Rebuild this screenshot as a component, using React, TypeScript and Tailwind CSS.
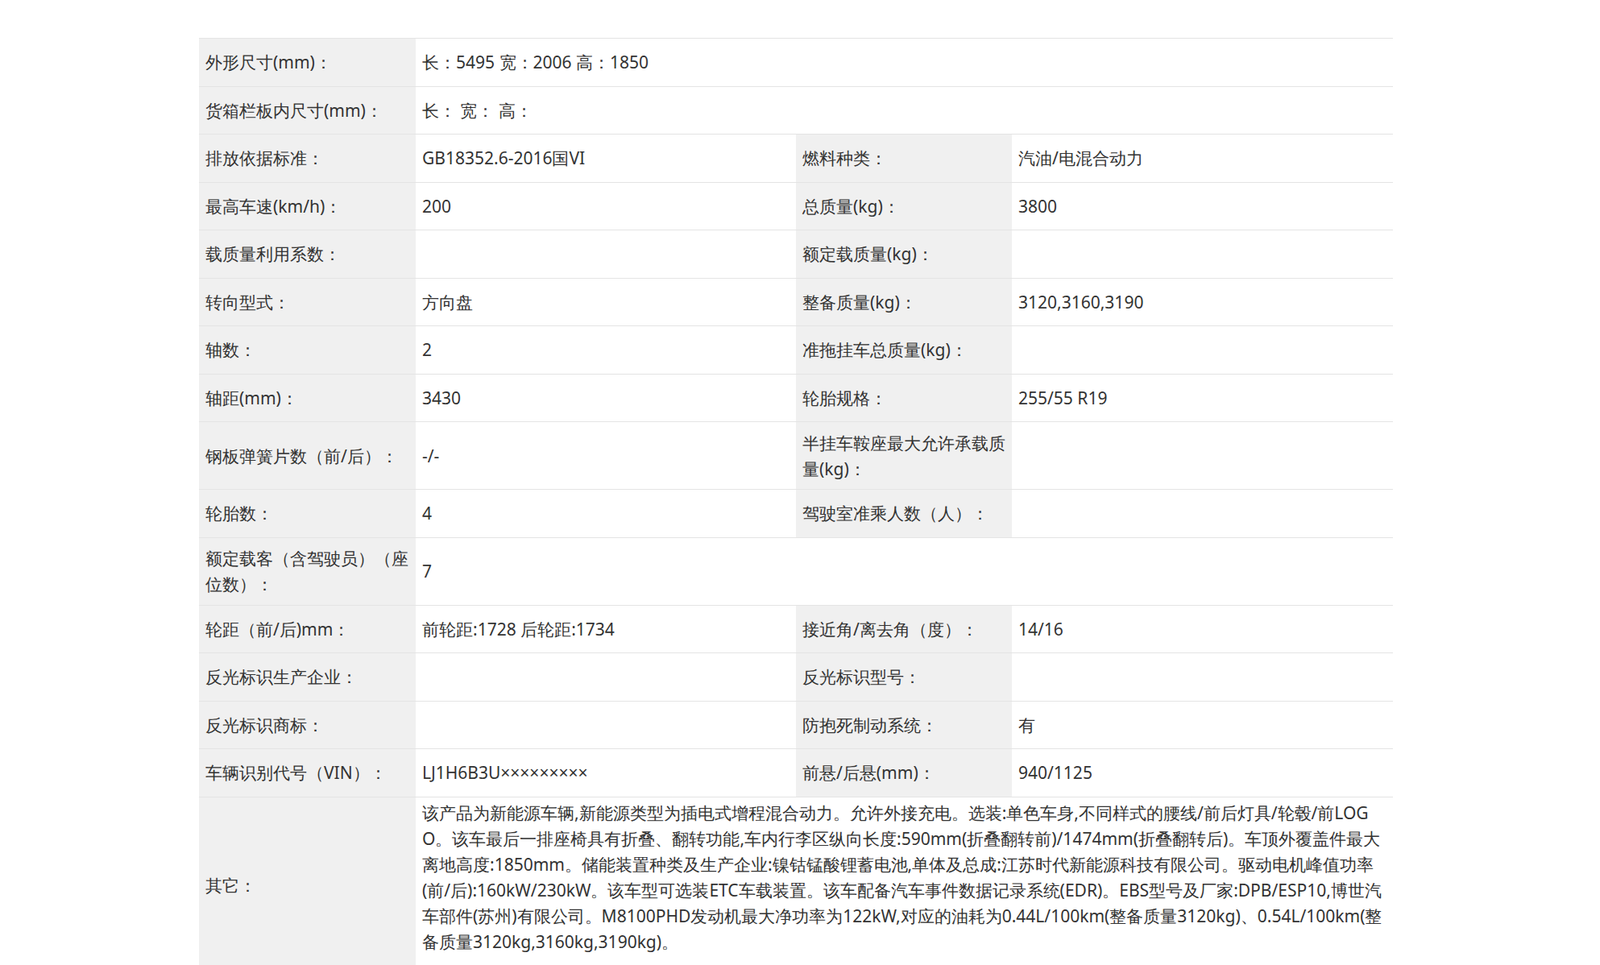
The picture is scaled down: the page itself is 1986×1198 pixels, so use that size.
const rows: [string, string, string?, string?][] = [
  ["外形尺寸(mm)：", "长：5495 宽：2006 高：1850"],
  ["货箱栏板内尺寸(mm)：", "长： 宽： 高："],
  ["排放依据标准：", "GB18352.6-2016国VI", "燃料种类：", "汽油/电混合动力"],
  ["最高车速(km/h)：", "200", "总质量(kg)：", "3800"],
  ["载质量利用系数：", "", "额定载质量(kg)：", ""],
  ["转向型式：", "方向盘", "整备质量(kg)：", "3120,3160,3190"],
  ["轴数：", "2", "准拖挂车总质量(kg)：", ""],
  ["轴距(mm)：", "3430", "轮胎规格：", "255/55 R19"],
  ["钢板弹簧片数（前/后）：", "-/-", "半挂车鞍座最大允许承载质量(kg)：", ""],
  ["轮胎数：", "4", "驾驶室准乘人数（人）：", ""],
  ["额定载客（含驾驶员）（座位数）：", "7"],
  ["轮距（前/后)mm：", "前轮距:1728 后轮距:1734", "接近角/离去角（度）：", "14/16"],
  ["反光标识生产企业：", "", "反光标识型号：", ""],
  ["反光标识商标：", "", "防抱死制动系统：", "有"],
  ["车辆识别代号（VIN）：", "LJ1H6B3U×××××××××", "前悬/后悬(mm)：", "940/1125"],
];

const other =
  "该产品为新能源车辆,新能源类型为插电式增程混合动力。允许外接充电。选装:单色车身,不同样式的腰线/前后灯具/轮毂/前LOGO。该车最后一排座椅具有折叠、翻转功能,车内行李区纵向长度:590mm(折叠翻转前)/1474mm(折叠翻转后)。车顶外覆盖件最大离地高度:1850mm。储能装置种类及生产企业:镍钴锰酸锂蓄电池,单体及总成:江苏时代新能源科技有限公司。驱动电机峰值功率(前/后):160kW/230kW。该车型可选装ETC车载装置。该车配备汽车事件数据记录系统(EDR)。EBS型号及厂家:DPB/ESP10,博世汽车部件(苏州)有限公司。M8100PHD发动机最大净功率为122kW,对应的油耗为0.44L/100km(整备质量3120kg)、0.54L/100km(整备质量3120kg,3160kg,3190kg)。";

const label = "bg-[#f0f0f0] px-2 flex items-center leading-[32px] border-b border-[#e4e4e4]";
const value = "bg-white px-2 flex items-center leading-[32px] border-b border-[#e4e4e4]";

export default function App() {
  return (
    <div className="bg-white w-[1986px] h-[1198px] overflow-hidden pt-[47px] pl-[247px] text-[21px] text-[#333] font-['Noto_Sans_CJK_SC','Noto_Sans',sans-serif]">
      <div className="grid grid-cols-[269px_472px_268px_473px] w-[1482px] border-t border-[#e4e4e4]">
        {rows.map(([l, v, l2, v2], i) => {
          const tall = l.length > 12 || (l2 ?? "").length > 12;
          const h = tall ? "min-h-[84px]" : "h-[59.5px]";
          return l2 === undefined ? (
            <div key={i} className="contents">
              <div className={`${label} ${h}`}>{l}</div>
              <div className={`${value} ${h} col-span-3`}>{v}</div>
            </div>
          ) : (
            <div key={i} className="contents">
              <div className={`${label} ${h}`}>{l}</div>
              <div className={`${value} ${h}`}>{v}</div>
              <div className={`${label} ${h}`}>{l2}</div>
              <div className={`${value} ${h}`}>{v2}</div>
            </div>
          );
        })}
        <div className={`${label} h-[220px]`}>其它：</div>
        <div className="col-span-3 bg-white px-2 pt-[3px] leading-[32px] break-all h-[220px]">{other}</div>
      </div>
    </div>
  );
}
